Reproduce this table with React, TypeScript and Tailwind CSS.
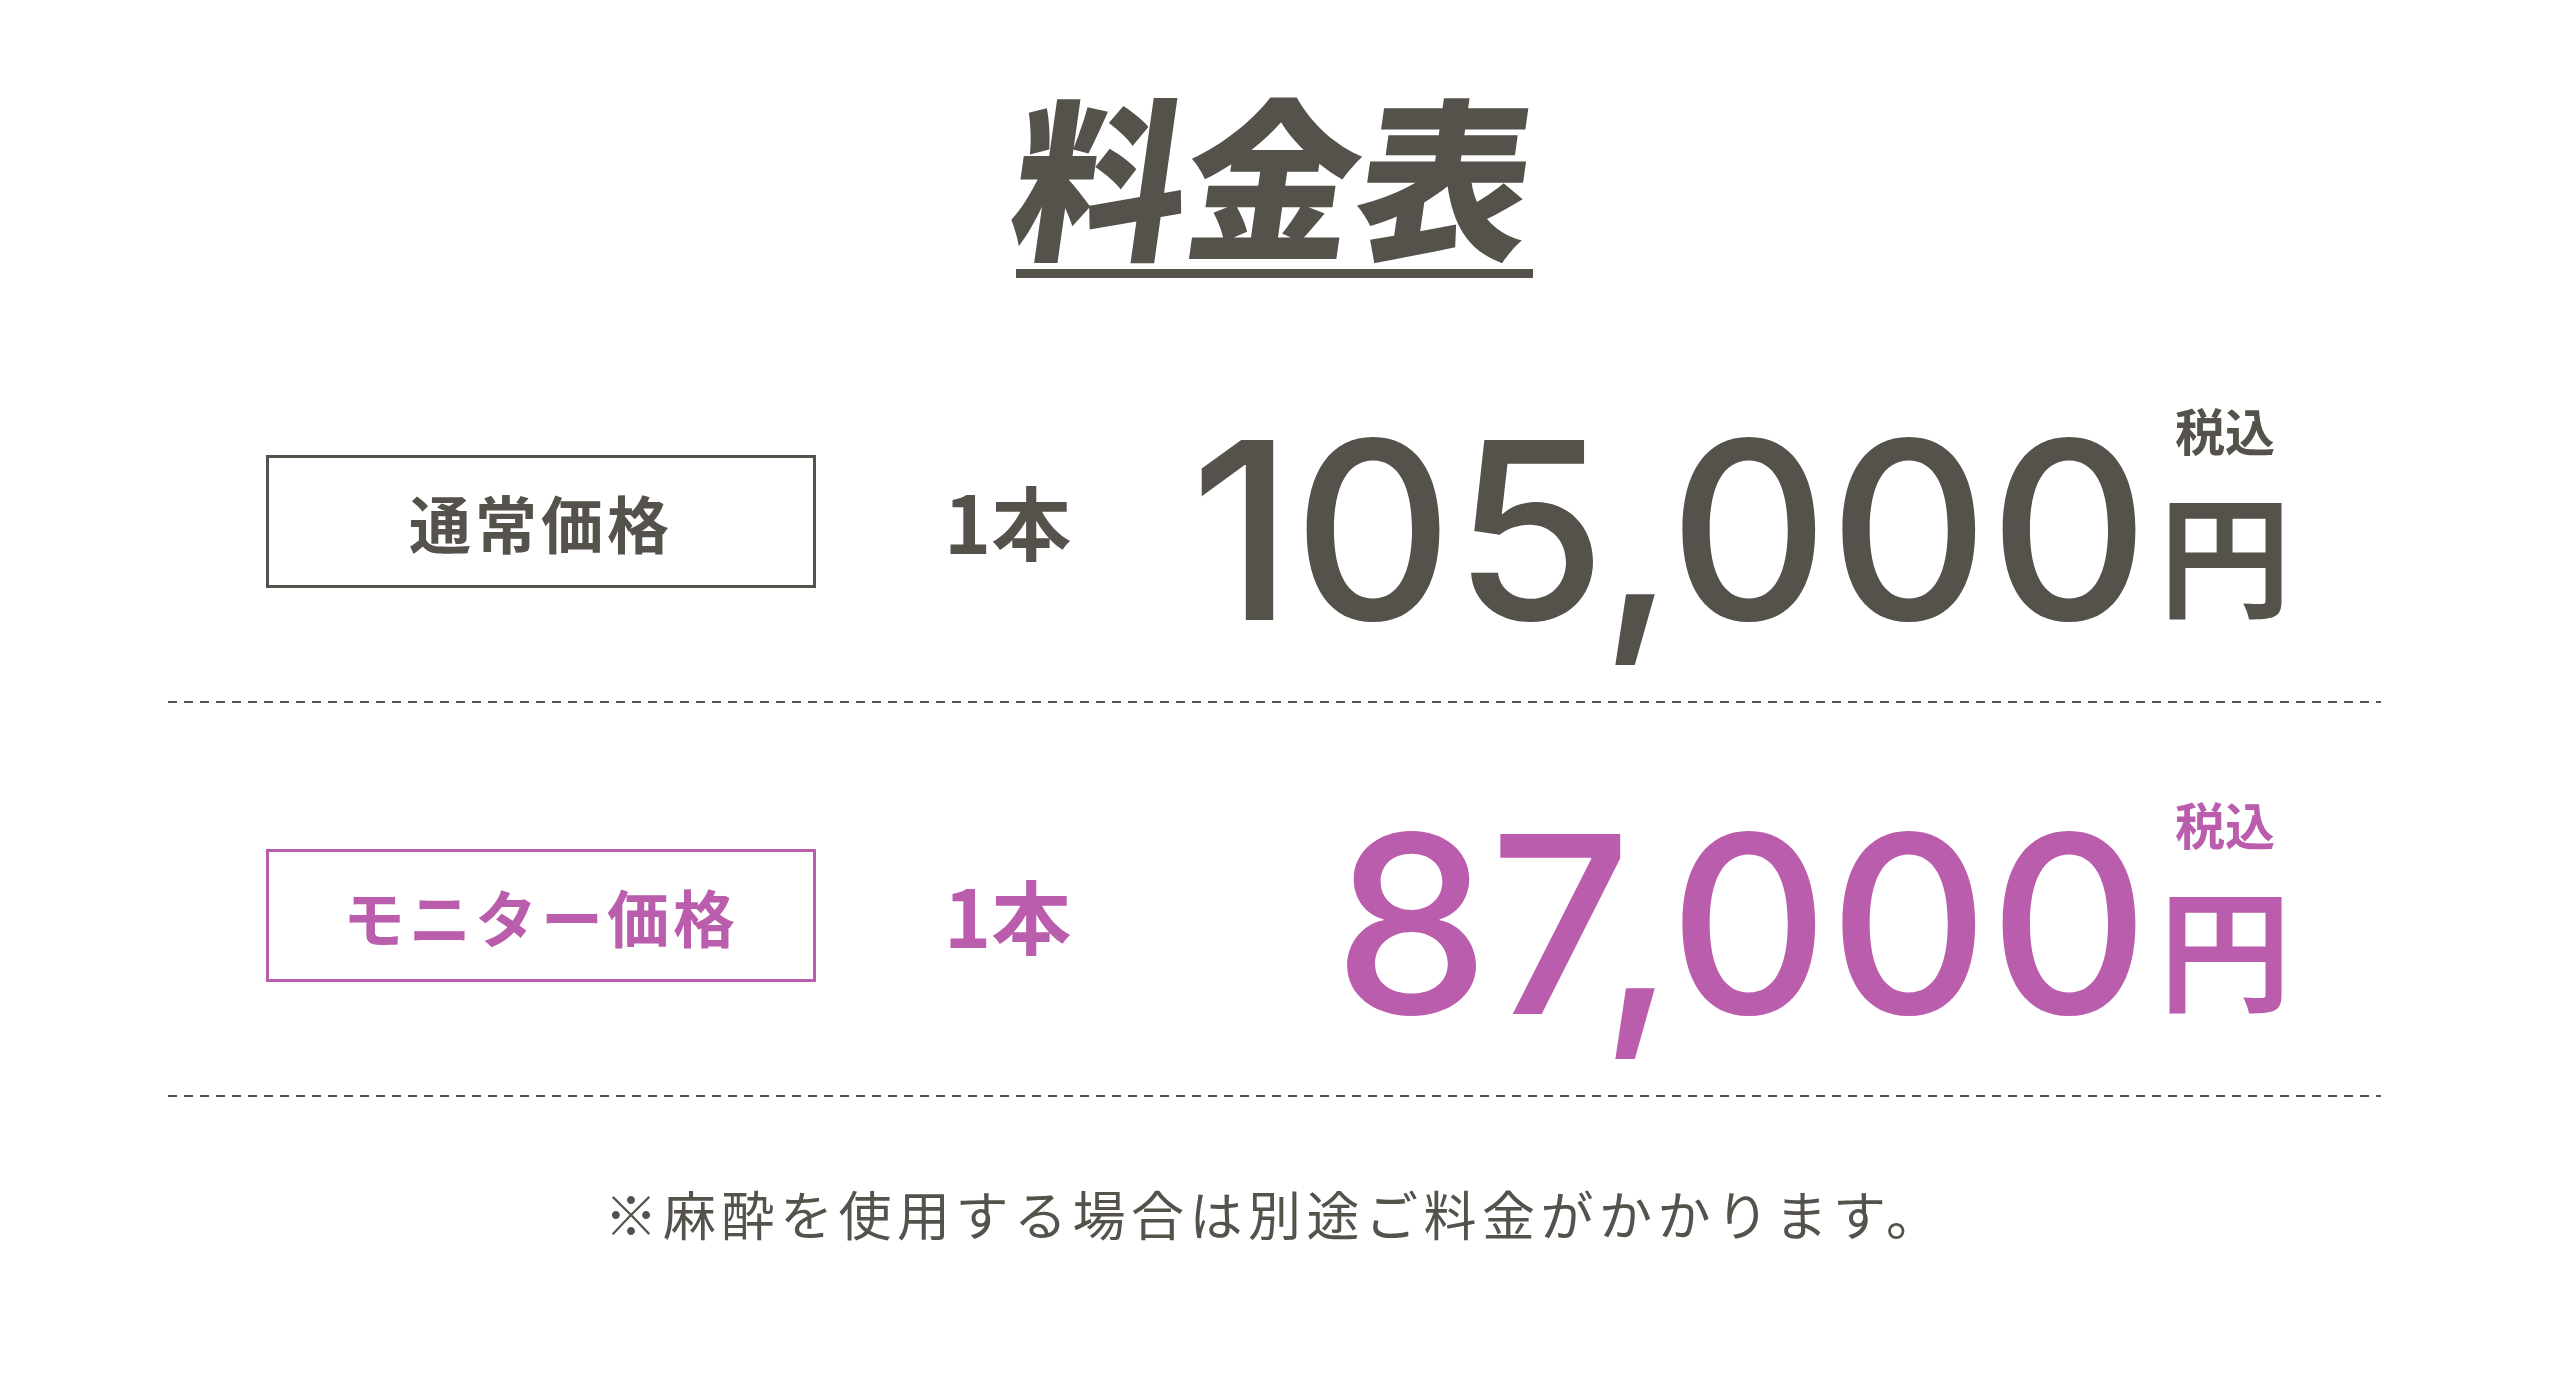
import React from 'react';

const GRAY = 'text-[#55524c]';
const PINK = 'text-[#bb5dad]';

type Row = {
  label: string;
  price: string;
  tone: 'gray' | 'pink';
};

const rows: Row[] = [
  { label: '通常価格', price: '105,000', tone: 'gray' },
  { label: 'モニター価格', price: '87,000', tone: 'pink' },
];

const Dashed: React.FC = () => (
  <div className="h-[2px] w-full bg-[linear-gradient(to_right,#55524c_9px,transparent_9px)] bg-[length:16px_2px]" />
);

const PriceRow: React.FC<{ row: Row; first?: boolean }> = ({ row, first }) => {
  const color = row.tone === 'pink' ? PINK : GRAY;
  const border = row.tone === 'pink' ? 'border-[#bb5dad]' : 'border-[#55524c]';
  return (
    <div className={`flex h-[133px] items-center pl-[98px] pr-[90px] ${first ? 'mt-[177px]' : 'mt-[146px]'}`}>
      {/* ラベル枠 */}
      <div className={`flex h-[133px] w-[550px] shrink-0 items-center justify-center border-[3px] ${border}`}>
        <span className={`text-[62px] font-bold leading-none tracking-[4px] ${color}`}>{row.label}</span>
      </div>
      <span className={`ml-[128px] -mt-[6px] text-[80px] font-bold leading-none ${color}`}>1本</span>
      {/* 金額 */}
      <div className={`ml-auto mt-[14px] flex items-end ${color}`}>
        <span className="font-['Inter',sans-serif] text-[248px] font-[550] leading-none tracking-[0px]">{row.price}</span>
        <div className="mb-[38px] ml-[10px] flex w-[132px] flex-col items-center">
          <span className="text-[50px] font-bold leading-none">税込</span>
          <span className="mt-[30px] text-[132px] font-bold leading-none">円</span>
        </div>
      </div>
    </div>
  );
};

const App: React.FC = () => {
  return (
    <div className="min-h-screen bg-white pl-[168px] pr-[179px] pt-[84px] font-['Noto_Sans_CJK_JP','Noto_Sans_CJK_SC',sans-serif]">
      <div className="flex justify-center">
        <h1 className={`border-b-[9px] border-[#55524c] pb-[11px] text-[174px] font-black leading-none tracking-[-2px] ${GRAY}`}>
          <span className="inline-block -skew-x-[8deg]">料金表</span>
        </h1>
      </div>

      <PriceRow row={rows[0]} first />
      <div className="mt-[113px]">
        <Dashed />
      </div>
      <PriceRow row={rows[1]} />
      <div className="mt-[113px]">
        <Dashed />
      </div>

      <p className={`mt-[90px] text-center text-[53px] leading-none tracking-[5.5px] ${GRAY}`}>
        ※麻酔を使用する場合は別途ご料金がかかります。
      </p>
    </div>
  );
};

export default App;
